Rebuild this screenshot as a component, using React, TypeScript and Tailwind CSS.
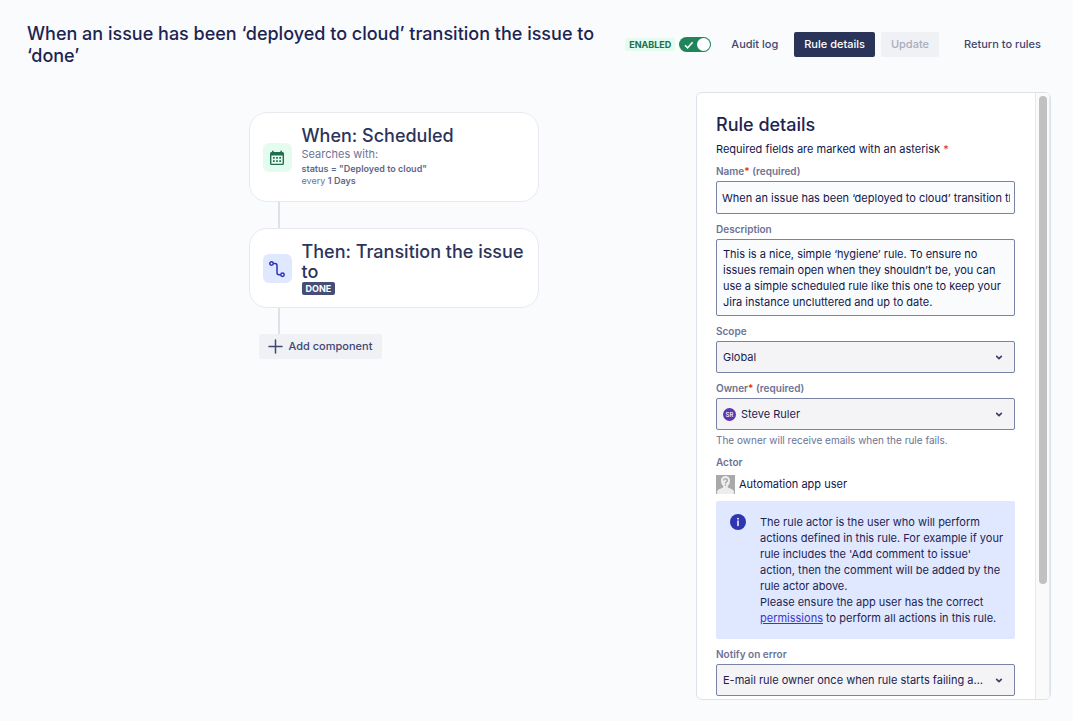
import { useState, type ReactNode } from "react";

const DESCRIPTION =
  "This is a nice, simple ‘hygiene’ rule. To ensure no issues remain open when they shouldn’t be, you can use a simple scheduled rule like this one to keep your Jira instance uncluttered and up to date.";

function CalendarIcon() {
  return (
    <svg className="w-4 h-4" viewBox="0 0 16 16" fill="none" aria-hidden="true">
      <path
        fill="#216e4e"
        fillRule="evenodd"
        d="M3 .8h1.600v1.300h6.800V.8H13v1.300h.5A1.500 1.500 0 0 1 15 3.600v10a1.500 1.500 0 0 1-1.500 1.500h-11A1.500 1.500 0 0 1 1 13.600v-10a1.500 1.500 0 0 1 1.500-1.500H3zM2.400 5.500v8.200h11.200V5.500z"
      />
      <path
        fill="#216e4e"
        d="M4 7h1.700v1.700H4zM7.150 7h1.700v1.700h-1.700zM10.300 7H12v1.700h-1.700zM4 10.300h1.700V12H4zM7.150 10.300h1.700V12h-1.700zM10.300 10.300H12V12h-1.700z"
      />
    </svg>
  );
}

function TransitionIcon() {
  return (
    <svg
      className="w-[18px] h-[18px]"
      viewBox="0 0 18 18"
      fill="none"
      stroke="#2f35b1"
      strokeWidth="1.500"
      aria-hidden="true"
    >
      <circle cx="3.500" cy="3.500" r="1.700" />
      <circle cx="14.500" cy="14.700" r="1.700" />
      <path d="M5.200 3.500H7a2 2 0 0 1 2 2v7.200a2 2 0 0 0 2 2h1.800" />
    </svg>
  );
}

function UnknownUserIcon() {
  return (
    <svg className="w-[19px] h-[19px]" viewBox="0 0 19 19" aria-hidden="true">
      <rect width="19" height="19" fill="#a9a9a9" />
      <path
        fill="#ededed"
        d="M9.500 1C6.500 1 4.800 3.200 5 6c.1 2.200.9 3.900 2.200 5v1.500L2.500 14.500C1.500 15 1 16 1 19h17c0-3-.5-4-1.500-4.500L11.800 12.500V11c1.300-1.100 2.100-2.800 2.200-5 .2-2.800-1.500-5-4.500-5z"
      />
      <path
        d="M7.700 5.500c0-2.400 3.700-2.300 3.600 0 0 1.400-1.800 1.300-1.800 2.900M9.500 9.600v1.200"
        fill="none"
        stroke="#999"
        strokeWidth="1.200"
      />
    </svg>
  );
}

function InfoIcon() {
  return (
    <svg className="w-4 h-4 shrink-0" viewBox="0 0 16 16" aria-hidden="true">
      <circle cx="8" cy="8" r="8" fill="#2f35b1" />
      <circle cx="8" cy="4.700" r="0.900" fill="#fff" />
      <path d="M8 7v4.500" stroke="#fff" strokeWidth="1.500" strokeLinecap="round" />
    </svg>
  );
}

function Label({
  htmlFor,
  required,
  children,
}: {
  htmlFor?: string;
  required?: boolean;
  children: ReactNode;
}) {
  return (
    <label htmlFor={htmlFor} className="block text-[10px] leading-3 font-semibold text-[#6b7394]">
      {children}
      {required && (
        <>
          <span className="text-[#de350b]">*</span> (required)
        </>
      )}
    </label>
  );
}

function SelectField({ id, option, avatar }: { id: string; option: string; avatar?: string }) {
  return (
    <div className="relative mt-1">
      <select
        id={id}
        className={`block w-full h-8 appearance-none rounded-xs border border-[#7a82a6] bg-[#f4f4f7] pr-7 text-[11px] text-[#1c2250] text-ellipsis ${
          avatar ? "pl-6" : "pl-1.5"
        }`}
      >
        <option>{option}</option>
      </select>
      {avatar && (
        <span className="absolute left-[7px] top-[10px] flex w-[13px] h-[13px] items-center justify-center rounded-full bg-[#5e35b1] text-[6px] font-medium text-white pointer-events-none">
          {avatar}
        </span>
      )}
      <svg
        className="absolute right-3 top-3 w-2 h-2 pointer-events-none"
        viewBox="0 0 8 8"
        fill="none"
        stroke="#3b4368"
        strokeWidth="1.700"
        strokeLinecap="round"
        strokeLinejoin="round"
        aria-hidden="true"
      >
        <path d="M1.700 3.400 4 5.700l2.300-2.300" />
      </svg>
    </div>
  );
}

function RuleCard({
  title,
  icon,
  iconClass,
  children,
}: {
  title: string;
  icon: ReactNode;
  iconClass: string;
  children: ReactNode;
}) {
  return (
    <section className="flex w-[290px] items-center gap-2.5 rounded-[18px] border border-[#e9eaef] bg-white pt-[13px] pb-3 pl-[13px] pr-3">
      <div className={`flex w-[29px] h-[29px] shrink-0 items-center justify-center rounded-md ${iconClass}`}>
        {icon}
      </div>
      <div>
        <h2 className="text-[18px] leading-5 font-medium text-[#2b345a]">{title}</h2>
        {children}
      </div>
    </section>
  );
}

export default function App() {
  const [enabled, setEnabled] = useState(true);
  const [name, setName] = useState(
    "When an issue has been ‘deployed to cloud’ transition the issue to ‘done’"
  );
  const [description, setDescription] = useState(DESCRIPTION);

  return (
    <div className="flex h-screen flex-col bg-[#fafbfd] font-[Inter,sans-serif] text-[11px] text-[#10164a]">
      {/* Header */}
      <header className="flex items-start justify-between pl-[27px] pr-8 pt-[23px]">
        <h1 className="w-[570px] text-[18px] leading-[22px] font-medium text-[#1c2452]">
          When an issue has been ‘deployed to cloud’ transition the issue to ‘done’
        </h1>
        <div className="flex shrink-0 items-center pt-[9px] font-medium text-[#3f4770]">
          <span className="rounded-xs bg-[#e3fcef] px-1 text-[9px] leading-[13px] font-bold text-[#216e4e]">
            ENABLED
          </span>
          <button
            role="switch"
            aria-checked={enabled}
            aria-label="Rule enabled"
            onClick={() => setEnabled(!enabled)}
            className={`ml-1 flex w-8 h-[15px] items-center rounded-full px-px ${
              enabled ? "justify-between bg-[#22845a]" : "justify-start bg-[#6b7394]"
            }`}
          >
            {enabled && (
              <svg className="ml-1 w-2.5 h-2.5" viewBox="0 0 10 10" fill="none" aria-hidden="true">
                <path d="M1 5.300 3.600 7.800 8.600 2.200" stroke="#fff" strokeWidth="1.500" />
              </svg>
            )}
            <span className="w-[13px] h-[13px] rounded-full bg-white" />
          </button>
          <button className="ml-[10px] h-[25px] px-[10px]">Audit log</button>
          <button className="ml-1.5 h-[25px] rounded-xs bg-[#2a3459] px-[10px] text-white">
            Rule details
          </button>
          <button disabled className="ml-1.5 h-[25px] rounded-xs bg-[#f0f1f5] px-[10px] text-[#a9aebf]">
            Update
          </button>
          <a href="#rules" className="ml-[25px]">
            Return to rules
          </a>
        </div>
      </header>

      <div className="flex min-h-0 flex-1 pt-[25px] pr-[22px] pb-[21px]">
        {/* Rule chain */}
        <main className="flex flex-1 justify-center pl-[91px] pt-5">
          <div className="w-[290px]">
            <RuleCard title="When: Scheduled" icon={<CalendarIcon />} iconClass="bg-[#e3fcef]">
              <p className="text-[11px] leading-[17px] text-[#6b7394]">Searches with:</p>
              <p className="text-[9px] leading-3 font-semibold text-[#5f6788]">
                status = "Deployed to cloud"
              </p>
              <p className="pb-0.5 text-[9px] leading-3 text-[#6b7394]">
                every <span className="font-semibold text-[#5f6788]">1 Days</span>
              </p>
            </RuleCard>
            <div className="ml-[29px] h-[26px] w-0.5 bg-[#dfe1e8]" />
            <RuleCard
              title="Then: Transition the issue to"
              icon={<TransitionIcon />}
              iconClass="bg-[#e0e8ff]"
            >
              <span className="block w-fit rounded-xs bg-[#454e74] px-1 text-[9px] leading-[13px] font-bold text-white">
                DONE
              </span>
            </RuleCard>
            <div className="ml-[29px] h-[26px] w-0.5 bg-[#dfe1e8]" />
            <button className="ml-[10px] flex h-[25px] items-center gap-1.5 rounded-xs bg-[#f0f1f5] pl-[9px] pr-[10px] font-medium text-[#3f4770]">
              <svg
                className="w-[15px] h-[15px]"
                viewBox="0 0 15 15"
                stroke="#3f4770"
                strokeWidth="1.500"
                strokeLinecap="round"
                aria-hidden="true"
              >
                <path d="M7.500 1v13M1 7.500h13" />
              </svg>
              Add component
            </button>
          </div>
        </main>

        {/* Rule details */}
        <aside className="flex w-[355px] shrink-0 overflow-hidden rounded-md border border-[#dfe1e8] bg-white">
          <div className="flex-1 overflow-y-auto pl-[19px] pr-5 pt-[22px] pb-24 [scrollbar-width:none]">
            <h2 className="text-[18px] leading-5 font-medium text-[#1c2452]">Rule details</h2>
            <p className="mt-1.5 leading-4">
              Required fields are marked with an asterisk{" "}
              <span className="text-[#de350b]">*</span>
            </p>

            <div className="mt-2">
              <Label htmlFor="name" required>
                Name
              </Label>
              <input
                id="name"
                value={name}
                onChange={(e) => setName(e.target.value)}
                className="mt-1 block w-full h-[33px] rounded-xs border border-[#7a82a6] bg-[#fafbfd] pl-[5px] pr-1"
              />
            </div>

            <div className="mt-[9px]">
              <Label htmlFor="description">Description</Label>
              <textarea
                id="description"
                value={description}
                onChange={(e) => setDescription(e.target.value)}
                className="mt-1 block w-full h-[77px] resize-none overflow-hidden rounded-xs border border-[#7a82a6] bg-[#fafbfd] px-1.5 py-1.5 leading-4"
              />
            </div>

            <div className="mt-[9px]">
              <Label htmlFor="scope">Scope</Label>
              <SelectField id="scope" option="Global" />
            </div>

            <div className="mt-[9px]">
              <Label htmlFor="owner" required>
                Owner
              </Label>
              <SelectField id="owner" option="Steve Ruler" avatar="SR" />
              <p className="mt-1 text-[10px] leading-3 text-[#6b7394]">
                The owner will receive emails when the rule fails.
              </p>
            </div>

            <div className="mt-[10px]">
              <h3 className="text-[10px] leading-3 font-semibold text-[#6b7394]">Actor</h3>
              <div className="mt-[7px] flex items-center gap-1">
                <UnknownUserIcon />
                Automation app user
              </div>
            </div>

            <div className="mt-[7px] flex gap-[14px] rounded-xs bg-[#e0e8ff] py-[13px] pl-[14px] pr-2 leading-4 text-[#1c2452]">
              <InfoIcon />
              <div>
                <p>
                  The rule actor is the user who will perform actions defined in this rule. For
                  example if your rule includes the 'Add comment to issue' action, then the comment
                  will be added by the rule actor above.
                </p>
                <p>
                  Please ensure the app user has the correct{" "}
                  <a href="#permissions" className="text-[#3538cd] underline">
                    permissions
                  </a>{" "}
                  to perform all actions in this rule.
                </p>
              </div>
            </div>

            <div className="mt-[9px]">
              <Label htmlFor="notify">Notify on error</Label>
              <SelectField
                id="notify"
                option="E-mail rule owner once when rule starts failing after success"
              />
            </div>
          </div>
          <div className="w-[15px] shrink-0 border-x border-[#e8e8ea] bg-[#fafafa] pt-[3px]">
            <div className="mx-auto h-[81%] w-2 rounded-full bg-[#c1c1c1]" />
          </div>
        </aside>
      </div>
    </div>
  );
}
